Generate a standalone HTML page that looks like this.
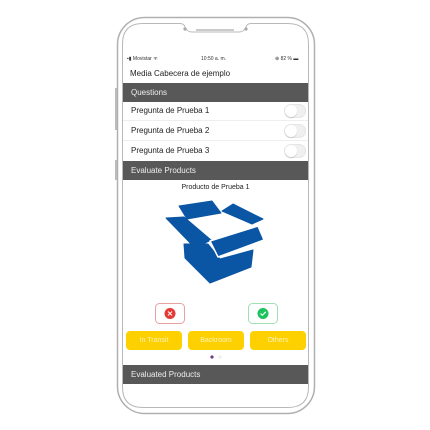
<!DOCTYPE html>
<html><head><meta charset="utf-8"><style>
*{margin:0;padding:0;box-sizing:border-box}
body{width:430px;height:430px;background:#fff;position:relative;overflow:hidden;font-family:"Liberation Sans",sans-serif;color:#222}
.a{position:absolute}
.bar{position:absolute;left:123px;width:185px;height:19px;background:#585858;color:#eee;font-size:8px;padding-left:8px;line-height:19px}
.row{position:absolute;left:123px;width:185px;height:20px;font-size:8px;padding-left:8px;line-height:20px;border-bottom:1px solid #eee}
.tg{position:absolute;right:2px;top:3px;width:22px;height:14px;border-radius:7px;background:#f0f0f0;box-shadow:inset 0 0 0 1px #e6e6e6}
.tg:after{content:"";position:absolute;left:1px;top:1px;width:12px;height:12px;border-radius:6px;background:#fff;box-shadow:0 1px 1px rgba(0,0,0,.15)}
.yb{position:absolute;top:331px;width:56px;height:19px;background:#fdd000;border-radius:4px;color:#fff3b8;font-size:7px;text-align:center;line-height:19px}
</style></head><body>
<svg class="a" style="left:0;top:0" width="430" height="430">
<rect x="117.5" y="17.5" width="197" height="396" rx="27" fill="none" stroke="#b0b0b0" stroke-width="1.5"/>
<path d="M143 23.5 H180 Q184 23.5 185 27 Q187 32 192 32 H239 Q244 32 246 27 Q247 23.5 251 23.5 H288 Q308.5 23.5 308.5 44 V387 Q308.5 407.5 288 407.5 H143 Q122.5 407.5 122.5 387 V44 Q122.5 23.5 143 23.5Z" fill="none" stroke="#b8b8b8" stroke-width="1"/>
<rect x="115" y="88" width="2" height="42" fill="#bbb"/>
<rect x="115" y="160" width="2" height="20" fill="#bbb"/>
<circle cx="185" cy="29" r="1.6" fill="#aaa"/><circle cx="246" cy="29" r="1.6" fill="#aaa"/>
<line x1="196" y1="30" x2="234" y2="30" stroke="#aaa" stroke-width="1.3"/>
<g fill="#0a56a5" stroke="#0a56a5" stroke-width="1" stroke-linejoin="round">
<polygon points="179,206 212,201 221,213 187,219"/>
<polygon points="222,211 233,204 263,219 252,224"/>
<polygon points="166,218 184,217 211,240 195,248"/>
<polygon points="184,244 208,244 220,259 253,250 251,267 210,283 185,258"/>
</g>
<polygon points="210,241 258,226 264,240 218,257" fill="#0a56a5" stroke="#fff" stroke-width="1.5" stroke-linejoin="round"/>
<rect x="155.5" y="303.5" width="29" height="20" rx="4" fill="#fff" stroke="#e8a0a0"/>
<circle cx="170" cy="313.5" r="5.5" fill="#e53935"/>
<path d="M168 311.5l4 4M172 311.5l-4 4" stroke="#fff" stroke-width="1"/>
<rect x="248.5" y="303.5" width="29" height="20" rx="4" fill="#fff" stroke="#9fe0b5"/>
<circle cx="263" cy="313.5" r="5.5" fill="#1bc35c"/>
<path d="M260.5 313.5l1.8 1.8 3.5-3.5" stroke="#fff" stroke-width="1.1" fill="none"/>
<circle cx="212" cy="357" r="1.6" fill="#6a3a8a"/><circle cx="220" cy="357" r="1.6" fill="#eee"/>
</svg>
<div class="a" style="left:127px;top:56px;font-size:5px;color:#333">▪▮ Movistar ᯤ</div>
<div class="a" style="left:201px;top:56px;font-size:5px;color:#333">10:50 a. m.</div>
<div class="a" style="left:275px;top:56px;font-size:5px;color:#333">⊕ 82 % ▬</div>
<div class="a" style="left:130px;top:69px;font-size:8px">Media Cabecera de ejemplo</div>
<div class="bar" style="top:83px">Questions</div>
<div class="row" style="top:101px">Pregunta de Prueba 1<div class="tg"></div></div>
<div class="row" style="top:121px">Pregunta de Prueba 2<div class="tg"></div></div>
<div class="row" style="top:141px;border:0">Pregunta de Prueba 3<div class="tg"></div></div>
<div class="bar" style="top:161px">Evaluate Products</div>
<div class="a" style="left:123px;width:185px;top:184px;font-size:7px;text-align:center">Producto de Prueba 1</div>
<div class="yb" style="left:126px">In Transit</div>
<div class="yb" style="left:188px">Backroom</div>
<div class="yb" style="left:250px">Others</div>
<div class="bar" style="top:365px">Evaluated Products</div>
</body></html>
